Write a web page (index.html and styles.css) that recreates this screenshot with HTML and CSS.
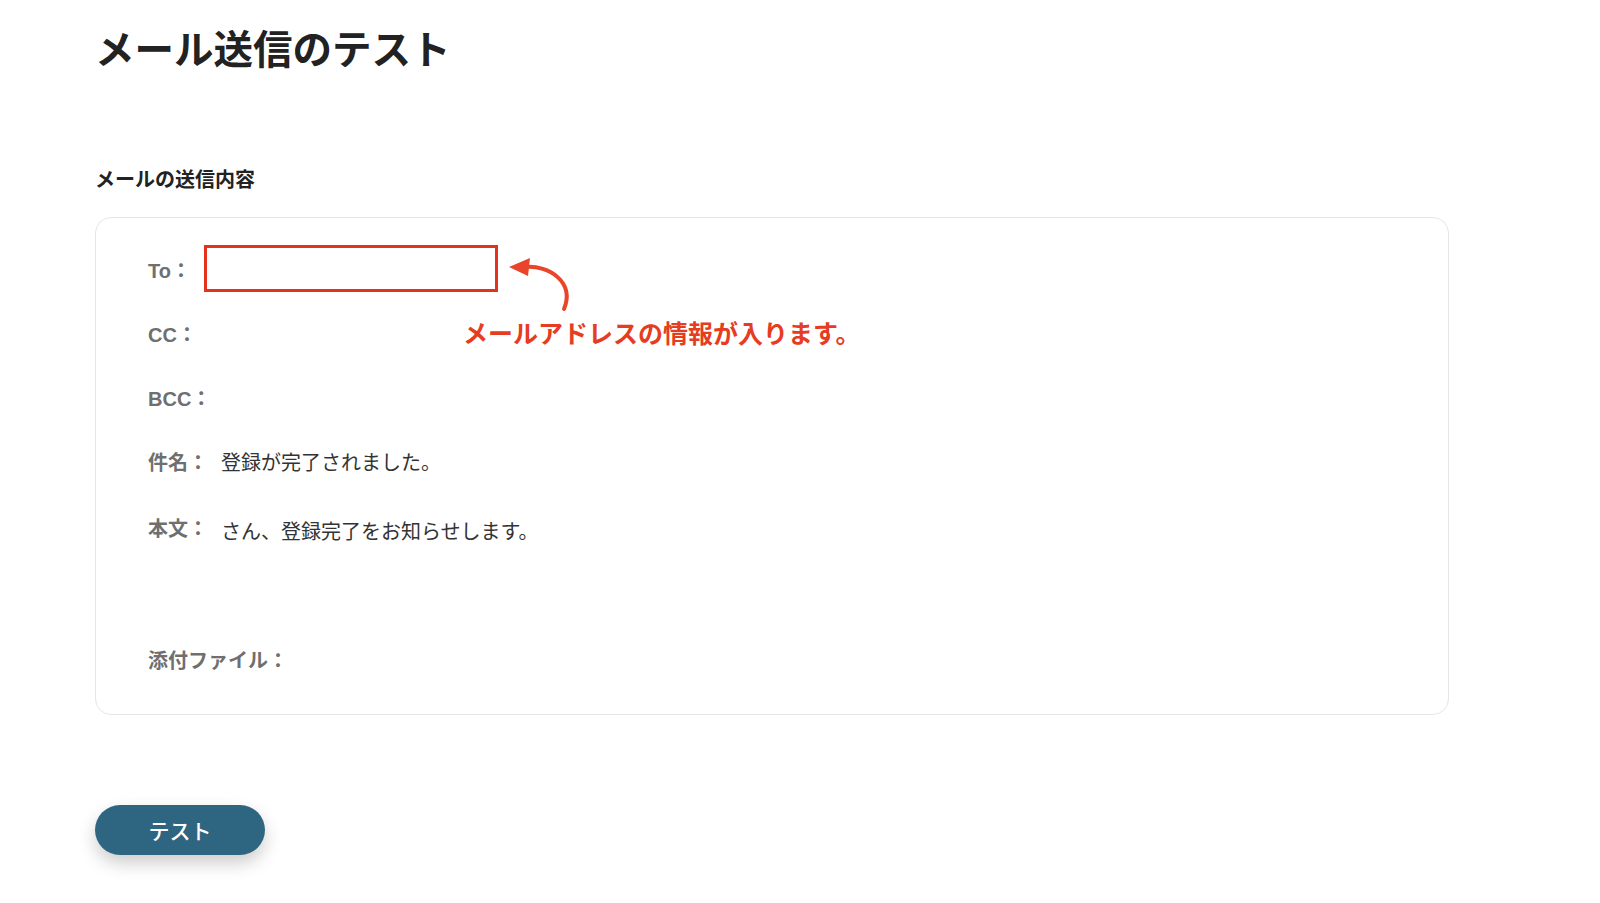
FILE: index.html
```html
<!DOCTYPE html>
<html lang="ja">
<head>
  <meta charset="UTF-8" />
  <meta name="viewport" content="width=device-width, initial-scale=1.0" />
  <title>メール送信のテスト</title>
  <link rel="stylesheet" href="styles.css">
</head>
<body>
  <div class="page">
    <h1>メール送信のテスト</h1>

    <h2>メールの送信内容</h2>

    <div class="mailCard">
      <div class="row">
        <span class="label">To：</span>
        <span class="highlight"></span>
      </div>
      <div class="row">
        <span class="label">CC：</span>
      </div>
      <div class="row">
        <span class="label">BCC：</span>
      </div>
      <div class="row">
        <span class="label">件名：</span>
        <span class="value">登録が完了されました。</span>
      </div>
      <div class="row body">
        <span class="label">本文：</span>
        <span class="value">さん、登録完了をお知らせします。</span>
      </div>
      <div class="row">
        <span class="label">添付ファイル：</span>
      </div>

      <!-- annotation over the card -->
      <svg class="arrow" width="80" height="60" viewBox="0 0 80 60">
        <path d="M24 11 C 48 9, 74 26, 63 53" fill="none" stroke="#e8452a" stroke-width="4" stroke-linecap="round" />
        <path d="M8 11 L29 2 L27 20 Z" fill="#e8452a" />
      </svg>
      <div class="note">メールアドレスの情報が入ります。</div>
    </div>

    <button class="testBtn">テスト</button>
  </div>
</body>
</html>
```

FILE: styles.css
```css
html, body {
  min-height: 100%;
}
body {
  margin: 0;
  padding: 0;
  background: #fff;
  font-family: "Liberation Sans", "Noto Sans CJK JP", sans-serif;
  color: #222;
}
.page {
  padding: 22px 0 46px 95px;
  width: 1354px;
}
h1 {
  margin: 0;
  font-size: 39.5px;
  line-height: 56px;
  font-weight: 700;
  color: #222;
}
h2 {
  margin: 88px 0 0;
  font-size: 20px;
  line-height: 28px;
  font-weight: 700;
  color: #222;
}
.mailCard {
  position: relative;
  margin-top: 23px;
  border: 1px solid #e6e6e6;
  border-radius: 16px;
  background: #fff;
  padding: 21px 52px 21px;
}
.row {
  display: flex;
  align-items: center;
  gap: 13px;
  height: 64px;
}
.row.body {
  align-items: flex-start;
  height: 134px;
  padding-top: 19px;
  box-sizing: border-box;
}
.row.body .value {
  margin-top: 3px;
}
.label {
  font-size: 20px;
  line-height: 30px;
  font-weight: 700;
  color: #6f6f6f;
}
.value {
  font-size: 20px;
  line-height: 30px;
  color: #333;
}
.highlight {
  width: 294px;
  height: 47px;
  box-sizing: border-box;
  border: 3px solid #e5321c;
  margin-top: -5px;
}
.arrow {
  position: absolute;
  left: 405px;
  top: 38px;
}
.note {
  position: absolute;
  left: 367px;
  top: 101px;
  font-size: 25px;
  line-height: 30px;
  font-weight: 700;
  color: #e53c22;
  white-space: nowrap;
}
.testBtn {
  display: block;
  margin-top: 90px;
  width: 170px;
  height: 50px;
  border: none;
  border-radius: 25px;
  background: #2e6580;
  color: #fff;
  font-family: "Noto Sans CJK JP", sans-serif;
  font-size: 21px;
  font-weight: 500;
  box-shadow: 0 8px 18px rgba(0, 0, 0, 0.2);
}
```
